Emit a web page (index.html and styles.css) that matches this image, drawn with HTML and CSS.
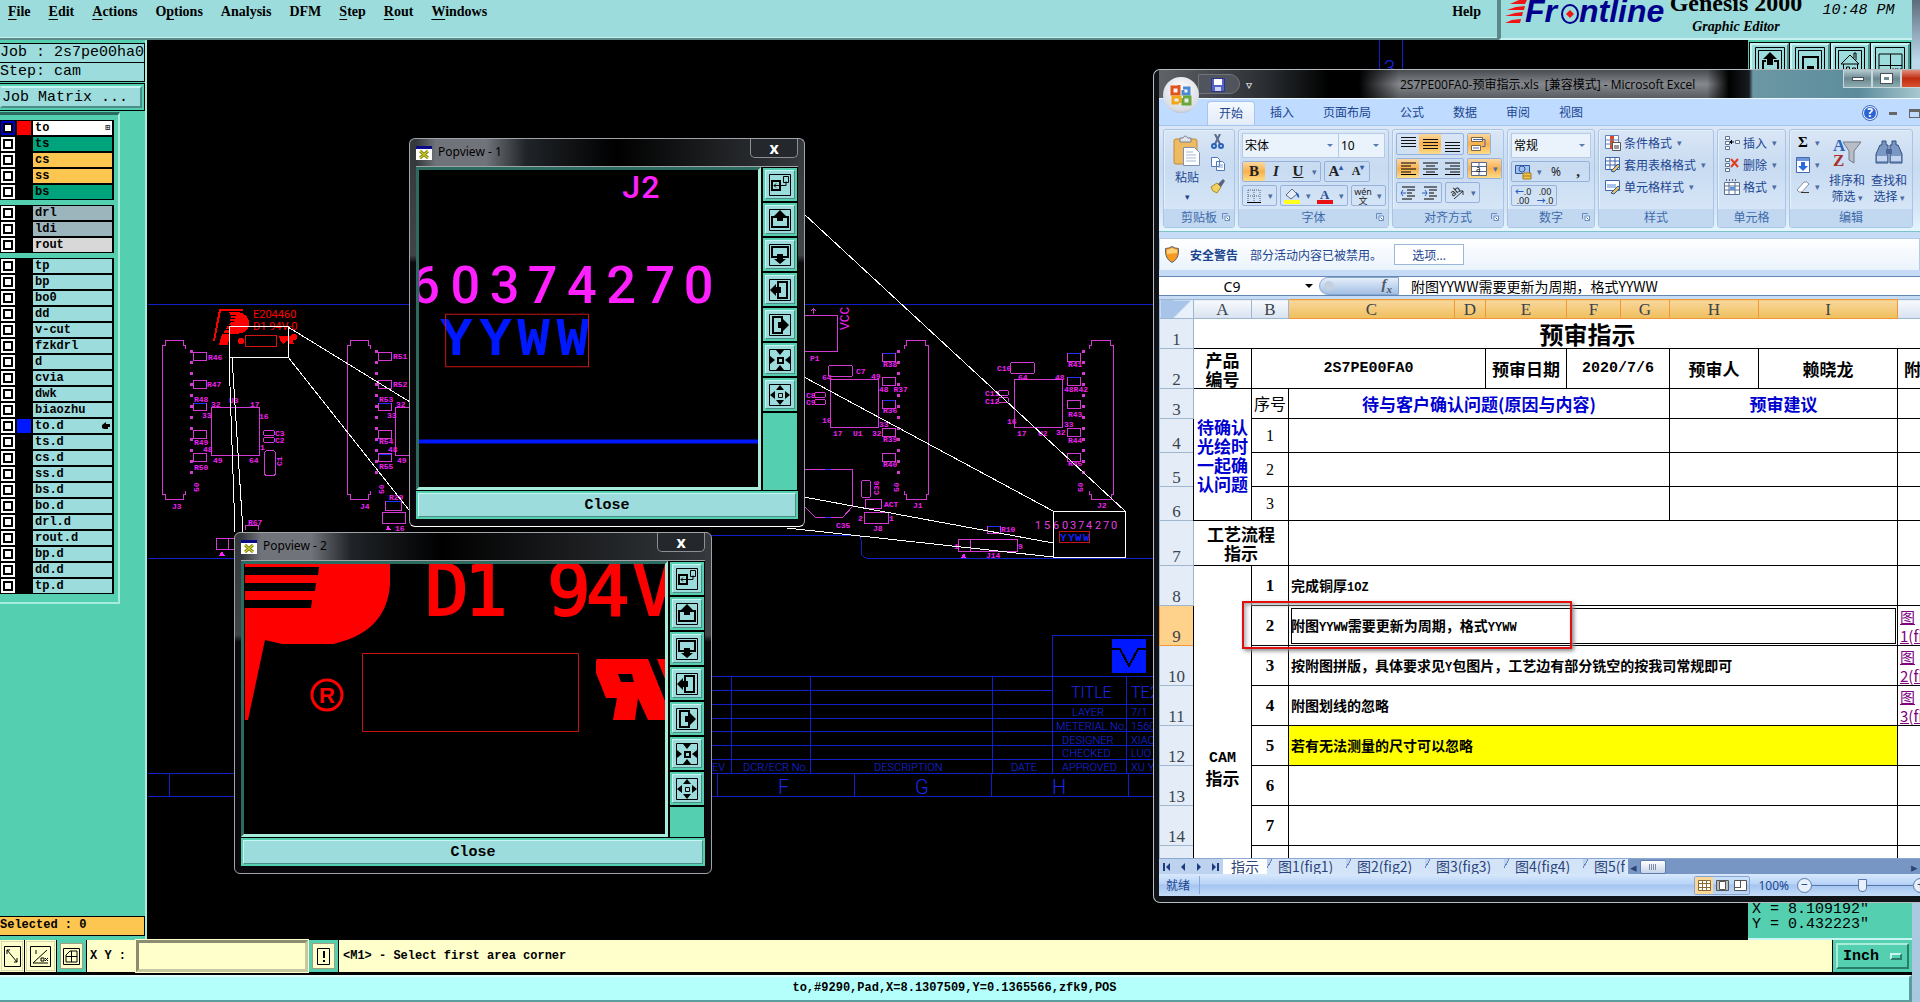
FILE: index.html
```html
<!DOCTYPE html>
<html lang="zh-CN">
  <head>
    <meta charset="UTF-8" />
    <meta name="viewport" content="width=device-width, initial-scale=1.0" />
    <title>Genesis 2000 Graphic Editor</title>
    <link rel="stylesheet" href="styles.css">
  </head>
  <body>
    <svg class="sprite" xmlns="http://www.w3.org/2000/svg">
      <defs>
        <symbol id="t-pop" viewBox="0 0 22 22"><path d="M.5.5h21v21H.5z" fill="none" stroke="#000"/><path d="M14.500 2.500h5v6h-5zM11 11.500h6v-4M5 11.500h5M7 9.500l-2 2 2 2" fill="none" stroke="#000"/><path d="M3 7h8v9H3z" fill="none" stroke="#000" stroke-width="2"/></symbol>
        <symbol id="t-up" viewBox="0 0 22 22"><path d="M.5.5h21v21H.5z" fill="none" stroke="#000"/><path d="M8 8H3v10h16V8h-5" fill="none" stroke="#000" stroke-width="2"/><path d="M11 1l6 6h-3v5H8V7H5z"/></symbol>
        <symbol id="t-down" viewBox="0 0 22 22"><path d="M.5.5h21v21H.5z" fill="none" stroke="#000"/><path d="M8 13H3V3h16v10h-5" fill="none" stroke="#000" stroke-width="2"/><path d="M11 20l6-5h-3v-5H8v5H5z"/></symbol>
        <symbol id="t-left" viewBox="0 0 22 22"><path d="M.5.5h21v21H.5z" fill="none" stroke="#000"/><path d="M9 8V3h9v16H9v-5" fill="none" stroke="#000" stroke-width="2"/><path d="M1 11l6-6v3h5v6H7v3z"/></symbol>
        <symbol id="t-right" viewBox="0 0 22 22"><path d="M.5.5h21v21H.5z" fill="none" stroke="#000"/><path d="M13 8V3H4v16h9v-5" fill="none" stroke="#000" stroke-width="2"/><path d="M20 11l-6-6v3H9v6h5v3z"/></symbol>
        <symbol id="t-in" viewBox="0 0 22 22"><path d="M.5.5h21v21H.5z" fill="none" stroke="#000"/><path d="M9 9h5v5H9z" fill="none" stroke="#000" stroke-width="2"/><path d="M7 1h8l-4 5zM7 21h8l-4-5zM1 7v8l5-4zM21 7v8l-5-4z"/></symbol>
        <symbol id="t-out" viewBox="0 0 22 22"><path d="M.5.5h21v21H.5z" fill="none" stroke="#000"/><path d="M9.500 9.500h4v4h-4z" fill="none" stroke="#000"/><path d="M7 6h8l-4-5zM7 16h8l-4 5zM6 7v8l-5-4zM16 7v8l5-4z"/></symbol>
        <symbol id="x-app" viewBox="0 0 16 14"><path d="M0 0h16v14H0z" fill="#fff"/><path d="M0 0h16v3H0z" fill="#0a0a88"/><path d="M4 5l8 7M12 5l-8 7" stroke="#8d8d12" stroke-width="3"/><path d="M4 5l8 7M12 5l-8 7" stroke="#dede3c"/></symbol>
        <symbol id="launch" viewBox="0 0 8 8"><path d="M.5 6V.5H6" fill="none" stroke="#6a8cc0"/><path d="M3 3h4.500v4.500H3z" fill="#fff" stroke="#6a8cc0"/><path d="M4.500 4.500l2 2" stroke="#3e5f99"/></symbol>
        <g id="left-block" fill="none" stroke="#d23ad2">
          <path d="M185 349v-4h-2v-5h-18v5h-3v149h3v5h18v-5h2v-3"/>
          <path d="M193.500 352.500h13v8h-13zM193.500 380.500h13v8h-13zM193.500 403.500h13v7h-13zM193.500 430.500h13v8h-13zM193.500 453.500h13v8h-13z"/>
          <path d="M191.500 350v132" stroke-width="3" stroke-dasharray="3 8"/>
        </g>
        <g id="right-block" fill="none" stroke="#d23ad2">
          <path d="M904 349v-4h2v-5h19v5h3v149h-2v5h-20v-5h-2v-3"/>
          <path d="M882.500 353.500h13v8h-13zM882.500 377.500h13v8h-13zM882.500 400.500h13v8h-13zM882.500 428.500h13v8h-13zM882.500 453.500h13v8h-13z"/>
          <path d="M898.500 350v132" stroke-width="3" stroke-dasharray="3 8"/>
        </g>
      </defs>
    </svg>

    <header class="topbar">
      <nav class="menubar">
        <a href="#"><u>F</u>ile</a>
        <a href="#"><u>E</u>dit</a>
        <a href="#"><u>A</u>ctions</a>
        <a href="#">O<u>p</u>tions</a>
        <a href="#">Analysis</a>
        <a href="#">DFM</a>
        <a href="#"><u>S</u>tep</a>
        <a href="#"><u>R</u>out</a>
        <a href="#"><u>W</u>indows</a>
        <a href="#" class="help">Help</a>
      </nav>
      <div class="brand">
        <svg class="brand-logo" width="162" height="40" viewBox="0 0 162 40">
          <g fill="#f01414"><path d="M14 0h8l-2 4H5zM11 7l9-1-1 4H2zM10 13l8-1-1 4H0zM7 20l9-1-1 4H0z"/></g>
          <g class="brand-name"><text x="20" y="22">Fr</text><text x="74" y="22">ntline</text></g>
          <ellipse cx="65" cy="14" rx="8" ry="9" fill="#9cdcdc" stroke="#00008c" stroke-width="2"/>
          <path d="M65 10l4 4-4 4-4-4z" fill="#f01414"/>
        </svg>
        <div class="brand-title"><strong>Genesis 2000</strong><em>Graphic Editor</em></div>
        <div class="clock"><span>07 Jul 2020</span><span>10:48 PM</span></div>
      </div>
    </header>

    <main class="workspace">
      <aside class="sidebar">
        <div class="job-box">
          <p>Job : 2s7pe00ha0</p>
          <p>Step: cam</p>
        </div>
        <div class="matrix-box"><button class="matrix">Job Matrix ...</button></div>
        <div class="layers">
          <div class="layer-group">
            <label class="layer current"><input type="checkbox"><i class="red"></i><span class="white">to<b>⊞</b></span></label>
            <label class="layer"><input type="checkbox"><i></i><span class="green">ts</span></label>
            <label class="layer"><input type="checkbox"><i></i><span class="orange">cs</span></label>
            <label class="layer"><input type="checkbox"><i></i><span class="orange">ss</span></label>
            <label class="layer"><input type="checkbox"><i></i><span class="green">bs</span></label>
          </div>
          <div class="layer-group">
            <label class="layer"><input type="checkbox"><i></i><span class="gray">drl</span></label>
            <label class="layer"><input type="checkbox"><i></i><span class="gray">ldi</span></label>
            <label class="layer"><input type="checkbox"><i></i><span class="silver">rout</span></label>
          </div>
          <div class="layer-group">
            <label class="layer"><input type="checkbox"><i></i><span>tp</span></label>
            <label class="layer"><input type="checkbox"><i></i><span>bp</span></label>
            <label class="layer"><input type="checkbox"><i></i><span>bo0</span></label>
            <label class="layer"><input type="checkbox"><i></i><span>dd</span></label>
            <label class="layer"><input type="checkbox"><i></i><span>v-cut</span></label>
            <label class="layer"><input type="checkbox"><i></i><span>fzkdrl</span></label>
            <label class="layer"><input type="checkbox"><i></i><span>d</span></label>
            <label class="layer"><input type="checkbox"><i></i><span>cvia</span></label>
            <label class="layer"><input type="checkbox"><i></i><span>dwk</span></label>
            <label class="layer"><input type="checkbox"><i></i><span>biaozhu</span></label>
            <label class="layer"><input type="checkbox"><i class="blue"></i><span>to.d<svg width="8" height="8" viewBox="0 0 8 8"><path d="M0 3l4-3v2h4v3H6v2H2L0 6z"/></svg></span></label>
            <label class="layer"><input type="checkbox"><i></i><span>ts.d</span></label>
            <label class="layer"><input type="checkbox"><i></i><span>cs.d</span></label>
            <label class="layer"><input type="checkbox"><i></i><span>ss.d</span></label>
            <label class="layer"><input type="checkbox"><i></i><span>bs.d</span></label>
            <label class="layer"><input type="checkbox"><i></i><span>bo.d</span></label>
            <label class="layer"><input type="checkbox"><i></i><span>drl.d</span></label>
            <label class="layer"><input type="checkbox"><i></i><span>rout.d</span></label>
            <label class="layer"><input type="checkbox"><i></i><span>bp.d</span></label>
            <label class="layer"><input type="checkbox"><i></i><span>dd.d</span></label>
            <label class="layer"><input type="checkbox"><i></i><span>tp.d</span></label>
          </div>
        </div>
        <p class="selected">Selected : 0</p>
      </aside>

      <svg class="board" xmlns="http://www.w3.org/2000/svg">
        <g transform="translate(-147 -40)">
          <!-- board outline and title block -->
          <g fill="none" stroke="#1020c8">
            <path d="M148 304.500h1005M148 558.500h86M700 535.500h158q3 0 3 4v12q1 7 8 7h284"/>
            <path d="M1379.500 40v40M1402.500 40v40"/>
            <path d="M148 773.500h1010M148 796.500h1010M169.500 773v23M717.500 773v23M854.500 773v23M991.500 773v23M1128.500 773v23"/>
            <path d="M700 676.500h458M700 690.500h352M700 704.500h458M700 718.500h458M700 731.500h458M700 745.500h458M700 759.500h458"/>
            <path d="M731.500 676v97M810.500 676v97M992.500 676v97M1052.500 773V635.500h105M1126.500 676v97"/>
          </g>
          <path d="M1112 639h34v34h-34z" fill="#0018ff"/>
          <path d="M1112 649h8l9 17 9-17h8" fill="none" stroke="#000" stroke-width="2"/>
          <g class="draft">
            <text x="1384" y="75" class="big">3</text>
            <text x="712" y="771">EV</text><text x="743" y="771">DCR/ECR No.</text><text x="874" y="771">DESCRIPTION</text><text x="1011" y="771">DATE</text>
            <text x="1071" y="698" class="mid">TITLE</text><text x="1131" y="698" class="mid">TE2</text>
            <text x="1072" y="716">LAYER</text><text x="1131" y="716">7/1</text>
            <text x="1056" y="730">METERIAL No.</text><text x="1131" y="730">1560</text>
            <text x="1062" y="744">DESIGNER</text><text x="1131" y="744">XIAO</text>
            <text x="1062" y="757">CHECKED</text><text x="1131" y="757">LUO</text>
            <text x="1062" y="771">APPROVED</text><text x="1131" y="771">XU Y</text>
            <text x="778" y="794" class="big">F</text><text x="915" y="794" class="big">G</text><text x="1052" y="794" class="big">H</text>
          </g>

          <!-- components -->
          <use href="#left-block"/>
          <use href="#left-block" x="185"/>
          <use href="#right-block"/>
          <use href="#right-block" x="185"/>
          <g fill="none" stroke="#d23ad2">
            <path d="M211.500 407.500h48v48h-48zM395.500 407.500h30v48h-30zM830.500 379.500h48v48h-48zM1014.500 379.500h48v48h-48z"/>
            <rect x="263.500" y="430.500" width="11" height="5" rx="2"/><rect x="263.500" y="437.500" width="11" height="5" rx="2"/><rect x="264.500" y="450.500" width="11" height="25" rx="3"/>
            <rect x="828.500" y="365.500" width="24" height="11" rx="2"/><rect x="1010.500" y="362.500" width="24" height="11" rx="2"/>
            <rect x="814.500" y="392.500" width="11" height="5" rx="2"/><rect x="814.500" y="399.500" width="11" height="5" rx="2"/>
            <rect x="998.500" y="390.500" width="10" height="5" rx="2"/><rect x="998.500" y="397.500" width="10" height="5" rx="2"/>
            <rect x="861.500" y="480.500" width="9" height="17" rx="2"/>
            <path d="M800 315.500h37.500v36H800M800 469.500h52.500v37l-10 11h-27l-15-15M865.500 499.500h16v9h-16zM864.500 512.500h24v11h-24zM987.500 526.500h13v7h-13zM958.500 539.500h59v12h-59zM970.500 539v12"/>
            <path d="M245.500 530v-4.500h13v4.500M234 538.500h-17.500v11h17M228.500 539v10M385.500 501.500h16v9h-16zM382.500 512.500h23v11h-23zM813.500 314v-5M811 311l2.500-2.500L816 311"/>
          </g>
          <path d="M222 551l3 5h-6zM388 525l3 5h-5zM964 553l2 5h-5z" fill="#ff20ff"/>
          <path d="M194 403.500h12M379 403.500h12M379 454.500h12M386 501.500h15M883 353.500h12M883 400.500h12M1068 353.500h12M1068 377.500h12M825 469.500h6M825 517.500h6M988 526.500h12" stroke="#2030ff"/>
          <g class="silk">
            <text x="208" y="360">R46</text><text x="207" y="387">R47</text><text x="194" y="402">R48</text><text x="194" y="445">R49</text><text x="194" y="470">R50</text>
            <text x="211" y="407">32</text><text x="202" y="418">33</text><text x="229" y="403">U3</text><text x="250" y="407">17</text><text x="259" y="419">16</text><text x="275" y="436">C3</text><text x="275" y="443">C2</text><text x="203" y="452">48</text><text x="213" y="463">49</text><text x="249" y="463">64</text><text x="260" y="450">1</text>
            <text x="172" y="509">J3</text><text x="360" y="509">J4</text><text x="248" y="525">R67</text>
            <text x="393" y="359">R51</text><text x="393" y="387">R52</text><text x="379" y="402">R53</text><text x="379" y="444">R54</text><text x="379" y="469">R55</text><text x="396" y="407">32</text><text x="387" y="418">33</text><text x="388" y="452">48</text><text x="397" y="463">49</text><text x="389" y="500">R29</text><text x="395" y="531">16</text>
            <text x="810" y="361">P1</text><text x="856" y="374">C7</text><text x="822" y="380">64</text><text x="871" y="379">49</text><text x="806" y="398">C8</text><text x="806" y="405">C9</text><text x="822" y="423">16</text><text x="833" y="436">17</text><text x="853" y="436">U1</text><text x="872" y="436">32</text><text x="879" y="427">33</text>
            <text x="883" y="367">R38</text><text x="879" y="392">48 R37</text><text x="883" y="413">R36</text><text x="883" y="442">R39</text><text x="883" y="467">R40</text><text x="913" y="508">J1</text><text x="884" y="507">ACT</text><text x="858" y="521">2</text><text x="889" y="521">1</text><text x="873" y="531">J8</text><text x="836" y="528">C35</text>
            <text x="997" y="371">C10</text><text x="1018" y="380">64</text><text x="1055" y="380">48</text><text x="985" y="396">C11</text><text x="985" y="404">C12</text><text x="1007" y="424">16</text><text x="1017" y="436">17</text><text x="1038" y="436">U2</text><text x="1056" y="435">32</text><text x="1064" y="427">33</text>
            <text x="1068" y="367">R41</text><text x="1064" y="392">48R42</text><text x="1068" y="417">R43</text><text x="1068" y="443">R44</text><text x="1068" y="466">R45</text><text x="1097" y="508">J2</text><text x="1001" y="532">R10</text><text x="954" y="549">1</text><text x="1018" y="549">9</text><text x="986" y="558">J14</text>
            <text transform="translate(849 330) rotate(-90)" class="vcc">VCC</text><text transform="translate(879 495) rotate(-90)">C36</text><text transform="translate(282 466) rotate(-90)">C1</text><text transform="translate(199 492) rotate(-90)">50</text><text transform="translate(384 494) rotate(-90)">50</text><text transform="translate(899 492) rotate(-90)">50</text><text transform="translate(1083 492) rotate(-90)">50</text>
          </g>
          <text class="serial" x="1035 1044 1053 1062 1070 1078 1086 1095 1103 1111" y="529">1560374270</text>
          <text class="yyww-small" x="1060 1068 1075 1083" y="541">YYWW</text>
          <path d="M1059.500 531.500h30v11h-30z" fill="none" stroke="#c81414"/>

          <!-- maker logo -->
          <g fill="#f00">
            <path d="M219 309h24v2h-22l-6 30h-2zM229 312h10q11 3 10 13-2 8-12 9h-7l-2 11h-9l2-8 7-12 3-3-1-3 1-2z"/>
            <path d="M279 336h12l3 8h-5l-2-4-4 4-3-4z"/>
            <circle cx="241" cy="341" r="3"/><circle cx="294" cy="337" r="3"/>
          </g>
          <path d="M224 315h12M223 318h12M222 321h12M221 325h10M220 329h9M220 333h9" stroke="#000"/>
          <path d="M245.500 335.500h31v11h-31z" fill="none" stroke="#d01414"/>
          <g class="ul-mark"><text x="253" y="318">E204460</text><text x="253" y="330">D1 94V-0</text></g>

          <!-- leader lines to the pop views -->
          <path d="M229.500 326.500h59v31h-59zM1053.500 511.500h72v46h-72zM229 357l6 175M232 357l11 175M288 327l122 75M288 357l121 153M804 214l321 297M804 377l249 134M804 497l249 46M787 528l266 29" fill="none" stroke="#fff"/>
        </g>
      </svg>

      <aside class="right-tools">
        <div class="tool-grid">
          <button aria-label="up"><svg width="32" height="34" viewBox="0 0 32 34"><path d="M1.500 1.500h29v31h-29zM4.500 4.500h23v26h-23z" fill="none" stroke="#000"/><path d="M12 15H9v16h15V15h-4" fill="none" stroke="#000" stroke-width="2"/><path d="M16 6l7 7h-4v6h-6v-6H9z"/></svg></button>
          <button aria-label="down"><svg width="32" height="34" viewBox="0 0 32 34"><path d="M1.500 1.500h29v31h-29zM4.500 4.500h23v26h-23z" fill="none" stroke="#000"/><path d="M13 25H9V11h15v14h-4" fill="none" stroke="#000" stroke-width="2"/><path d="M13 20h7v5h3l-7 6-6-6h3z"/></svg></button>
          <button aria-label="home"><svg width="32" height="34" viewBox="0 0 32 34"><path d="M1.500 1.500h29v31h-29zM4.500 4.500h23v26h-23z" fill="none" stroke="#000"/><path d="M7 18l9-9 9 9zM9.500 18v13h14V18M12.500 21h3v4h-3zM18.500 31v-9h3v9M20 12V7h2v7" fill="none" stroke="#000"/></svg></button>
          <button aria-label="xy"><svg width="32" height="34" viewBox="0 0 32 34"><path d="M1.500 1.500h29v31h-29zM5 8h23v23H5zM16.500 8v23M5 19.500h23" fill="none" stroke="#000"/><text x="18" y="27" font-size="8">XY</text></svg></button>
        </div>
        <p class="coords">X = 8.109192"<br>Y = 0.432223"</p>
      </aside>
    </main>

    <footer>
      <div class="command">
        <button class="mode" aria-label="Snap"><svg width="17" height="21" viewBox="0 0 17 21"><path d="M.5.5h16v20H.5zM3 4l10 12M3 8V4h3M10 16h3v-4" fill="none" stroke="#000"/></svg></button>
        <button class="mode" aria-label="Measure"><svg width="21" height="21" viewBox="0 0 21 21"><path d="M.5.5h20v20H.5zM3 17L17 4M6 4v4M3 17h15M11 12h3v3h-3zM15 12l3 3M18 12l-3 3" fill="none" stroke="#000"/></svg></button>
        <button class="mode on" aria-label="Grid"><svg width="17" height="17" viewBox="0 0 17 17"><path d="M.5.5h16v16H.5zM3 7l4-4h7v11H3zM8.500 3v11M3 8.500h11" fill="none" stroke="#000"/></svg></button>
        <label class="xy" for="xy">X Y :</label>
        <input id="xy" type="text">
        <button class="mode on" aria-label="Alert"><svg width="13" height="17" viewBox="0 0 13 17"><path d="M.5.5h12v16H.5z" fill="none" stroke="#000"/><path d="M6 3h2v7H6zM6 12h2v2H6z"/></svg></button>
        <p class="hint">&lt;M1&gt; - Select first area corner</p>
        <div class="unit"><button>Inch<i></i></button></div>
      </div>
      <p class="status-line">to,#9290,Pad,X=8.1307509,Y=0.1365566,zfk9,POS</p>
    </footer>

    <section class="popview first">
      <header><svg width="16" height="14"><use href="#x-app"/></svg><span>Popview - 1</span><button class="shut" aria-label="Close window">x</button></header>
      <div class="pop-body">
        <div class="pop-view">
          <svg viewBox="420 170 337 318" preserveAspectRatio="xMinYMin slice">
            <text class="pop-label" x="631 650" y="198">J2</text>
            <text class="pop-digits" x="426 466 505 543 582 621 660 698" y="302">60374270</text>
            <text class="pop-week" x="457 496 534 573" y="354">YYWW</text>
            <path d="M446.500 313.500h142v52h-142z" fill="none" stroke="#c81414"/>
            <path d="M420 438h337v4H420z" fill="#0018ff"/>
          </svg>
        </div>
        <div class="pop-tools">
          <button aria-label="Pop"><svg><use href="#t-pop"/></svg></button>
          <button aria-label="Up"><svg><use href="#t-up"/></svg></button>
          <button aria-label="Down"><svg><use href="#t-down"/></svg></button>
          <button aria-label="Left"><svg><use href="#t-left"/></svg></button>
          <button aria-label="Right"><svg><use href="#t-right"/></svg></button>
          <button aria-label="Zoom in"><svg><use href="#t-in"/></svg></button>
          <button aria-label="Zoom out"><svg><use href="#t-out"/></svg></button>
          <i></i>
        </div>
        <button class="pop-close">Close</button>
      </div>
    </section>

    <section class="popview second">
      <header><svg width="16" height="14"><use href="#x-app"/></svg><span>Popview - 2</span><button class="shut" aria-label="Close window">x</button></header>
      <div class="pop-body">
        <div class="pop-view">
          <svg viewBox="244 564 421 270" preserveAspectRatio="xMinYMin slice">
            <path d="M245 564h145v20q-3 48-57 60h-51l-17-4-17 80h-3z" fill="#f00"/>
            <path d="M245 567h74l-1 8h-73zM245 583h71l-1 8h-70zM245 600h67l-1 8h-66z"/>
            <text class="pop-d1" x="447 486 569 608 654" y="615">D194V</text>
            <circle cx="327" cy="695" r="15" fill="none" stroke="#f00" stroke-width="3"/>
            <text class="pop-r" x="327" y="703">R</text>
            <path d="M362.500 653.500h216v78h-216z" fill="none" stroke="#c81414"/>
            <path d="M597 659h51l17 42v19h-17l-10-22-3 22h-22l4-22h-11l-10-25v-12zM657 659h8v20zM618 674l3 8h13l-2-8z" fill="#f00" fill-rule="evenodd"/>
          </svg>
        </div>
        <div class="pop-tools">
          <button aria-label="Pop"><svg><use href="#t-pop"/></svg></button>
          <button aria-label="Up"><svg><use href="#t-up"/></svg></button>
          <button aria-label="Down"><svg><use href="#t-down"/></svg></button>
          <button aria-label="Left"><svg><use href="#t-left"/></svg></button>
          <button aria-label="Right"><svg><use href="#t-right"/></svg></button>
          <button aria-label="Zoom in"><svg><use href="#t-in"/></svg></button>
          <button aria-label="Zoom out"><svg><use href="#t-out"/></svg></button>
          <i></i>
        </div>
        <button class="pop-close">Close</button>
      </div>
    </section>

    <section class="excel">
      <div class="orb">
        <svg width="24" height="24" viewBox="0 0 24 24" fill="none" stroke-width="3"><path d="M10 4H3v7h7V2" stroke="#e2521c"/><path d="M14 5h6v6h-6V7" stroke="#4a8ad0"/><path d="M10 20H4v-6h7v6" stroke="#f0a818"/><path d="M14 14h7v7h-7v-6" stroke="#6aa83a"/></svg>
      </div>
      <header class="excel-title">
        <div class="quick">
          <button aria-label="保存"><svg width="14" height="14" viewBox="0 0 14 14"><path d="M.5.5h13v13H.5z" fill="#5560c8" stroke="#2c348c"/><path d="M3 1h8v6H3z" fill="#fff"/><path d="M4 9h6v4H4z" fill="#cfd6f0"/></svg></button>
        </div>
        <span class="more">▿</span>
        <h1>2S7PE00FA0-预审指示.xls&nbsp; [兼容模式] - Microsoft Excel</h1>
        <div class="win-buttons">
          <button aria-label="最小化"><i class="min"></i></button><button aria-label="还原"><i class="max"></i></button><button class="end" aria-label="关闭">x</button>
        </div>
      </header>

      <nav class="tabs">
        <a href="#" class="active">开始</a><a href="#">插入</a><a href="#">页面布局</a><a href="#">公式</a><a href="#">数据</a><a href="#">审阅</a><a href="#">视图</a>
        <div class="tabs-end"><button class="ask" aria-label="帮助">?</button><i class="min"></i><i class="max"></i></div>
      </nav>

      <div class="ribbon">
        <div class="group g-clip">
          <div class="group-body">
            <button class="big-btn">
              <svg width="28" height="32" viewBox="0 0 28 32"><rect x="1" y="4" width="23" height="25" rx="2" fill="#eebb62" stroke="#c08a34"/><path d="M7 7V3h3q2-4 5 0h3v4z" fill="#dfe3ea" stroke="#7a818e"/><path d="M10.500 12.500h11l5 5v13h-16z" fill="#fff" stroke="#7f92b4"/><path d="M13 17h7M13 20h10M13 23h10M13 26h10" stroke="#a9b8d6"/></svg>
              粘贴<small>▾</small>
            </button>
            <div class="stack clip-icons">
              <svg width="16" height="16" viewBox="0 0 16 16"><path d="M5 0l5 10M10 0L5 10" stroke="#5b6c8c" stroke-width="2"/><circle cx="4" cy="12" r="2" fill="none" stroke="#2b61b8" stroke-width="2"/><circle cx="11" cy="12" r="2" fill="none" stroke="#2b61b8" stroke-width="2"/></svg>
              <svg width="16" height="16" viewBox="0 0 16 16"><path d="M1.500 1.500h6l2 2v7h-8zM6.500 5.500h6l2 2v7h-8z" fill="#fff" stroke="#4d79bd"/><path d="M8 9h5M8 11h5" stroke="#7ea1d6"/></svg>
              <svg width="16" height="16" viewBox="0 0 16 16"><path d="M1 9l6-4 4 4-4 6q-5-1-6-6z" fill="#f2d25c" stroke="#a88a2c"/><path d="M8 6l5-5 2 2-4 6z" fill="#59627c"/></svg>
            </div>
          </div>
          <h2>剪贴板<svg width="8" height="8"><use href="#launch"/></svg></h2>
        </div>

        <div class="group g-font">
          <div class="group-body stack">
            <div class="line">
              <label class="combo wide"><select aria-label="字体"><option>宋体</option></select></label><label class="combo"><select aria-label="字号"><option>10</option></select></label>
            </div>
            <div class="line">
              <div class="seg"><button class="on serif"><b>B</b></button><button class="serif"><em>I</em></button><button class="serif"><u>U</u></button><button class="drop">▾</button></div>
              <div class="seg"><button class="serif">A<sup>▴</sup></button><button class="serif small">A<sup>▾</sup></button></div>
            </div>
            <div class="line">
              <div class="seg"><button aria-label="边框"><svg width="14" height="14" viewBox="0 0 14 14"><path d="M1 1h12v12M1 1v12M7 1v12M1 7h12" fill="none" stroke="#54658a" stroke-dasharray="1 1"/><path d="M0 13.500h14" stroke="#000"/></svg></button><button class="drop">▾</button></div>
              <div class="seg"><button aria-label="填充"><svg width="17" height="17" viewBox="0 0 17 17"><path d="M2 8l6-6 5 5-6 5z" fill="#e8eef8" stroke="#55688c"/><path d="M12 5q4 2 3 6-2-1-3-4z" fill="#2c64b8"/><path d="M0 13h16v4H0z" fill="#ffff20"/></svg></button><button class="drop">▾</button><button aria-label="字体颜色"><svg width="17" height="17" viewBox="0 0 17 17"><text x="3" y="12" class="glyph">A</text><path d="M0 13h16v4H0z" fill="#e81010"/></svg></button><button class="drop">▾</button></div>
              <div class="seg"><button class="wen">wén<br>文</button><button class="drop">▾</button></div>
            </div>
          </div>
          <h2>字体<svg width="8" height="8"><use href="#launch"/></svg></h2>
        </div>

        <div class="group g-align">
          <div class="group-body stack">
            <div class="line">
              <div class="seg"><button class="al" aria-label="顶端"><i class="bars top"></i></button><button class="al on" aria-label="居中"><i class="bars"></i></button><button class="al" aria-label="底端"><i class="bars low"></i></button></div>
              <div class="seg"><button class="on" aria-label="自动换行"><svg width="18" height="16" viewBox="0 0 18 16"><path d="M1.500 1.500h11v4h-11zM1.500 9.500h9v5h-9z" fill="#fff" stroke="#7d6440"/><path d="M3 3.500h12v7h-3M3 12h6" fill="none" stroke="#46659c"/></svg></button></div>
            </div>
            <div class="line">
              <div class="seg"><button class="al on" aria-label="左对齐"><svg width="15" height="13" viewBox="0 0 15 13"><path d="M0 1h15M0 4h10M0 7h15M0 10h10M0 12.500h15" stroke="#000"/></svg></button><button class="al" aria-label="居中"><svg width="15" height="13" viewBox="0 0 15 13"><path d="M0 1h15M3 4h9M0 7h15M3 10h9M0 12.500h15" stroke="#000"/></svg></button><button class="al" aria-label="右对齐"><svg width="15" height="13" viewBox="0 0 15 13"><path d="M0 1h15M5 4h10M0 7h15M5 10h10M0 12.500h15" stroke="#000"/></svg></button></div>
              <div class="seg on-seg"><button aria-label="合并"><svg width="16" height="14" viewBox="0 0 16 14"><path d="M.5.5h15v13H.5zM8 1v3M8 10v3M1 4.500h14M1 9.500h14" fill="#fff" stroke="#55688c"/><text x="5" y="10" font-size="8">a</text></svg></button><button class="drop on">▾</button></div>
            </div>
            <div class="line">
              <div class="seg"><button class="al" aria-label="减少缩进"><svg width="16" height="14" viewBox="0 0 16 14"><path d="M2 1h13M7 4h8M7 7h5M7 10h8M2 13h10" stroke="#000"/><path d="M6 7H1M3 4L1 7l2 3" fill="none" stroke="#2c5cc0"/></svg></button><button class="al" aria-label="增加缩进"><svg width="16" height="14" viewBox="0 0 16 14"><path d="M2 1h13M7 4h8M7 7h5M7 10h8M2 13h10" stroke="#000"/><path d="M0 7h5M3 4l2 3-2 3" fill="none" stroke="#2c5cc0"/></svg></button></div>
              <div class="seg"><button aria-label="方向"><svg width="16" height="14" viewBox="0 0 16 14"><text transform="translate(4 11) rotate(-40)" font-size="9">ab</text><path d="M5 13l9-8M14 9V5h-4" fill="none" stroke="#333"/></svg></button><button class="drop">▾</button></div>
            </div>
          </div>
          <h2>对齐方式<svg width="8" height="8"><use href="#launch"/></svg></h2>
        </div>

        <div class="group g-num">
          <div class="group-body stack">
            <div class="line"><label class="combo full"><select aria-label="数字格式"><option>常规</option></select></label></div>
            <div class="line"><div class="seg"><button aria-label="货币"><svg width="17" height="16" viewBox="0 0 17 16"><path d="M.5 1.500h14v8H.5z" fill="#9fc0ea" stroke="#2f58a4"/><circle cx="7" cy="5" r="3" fill="none" stroke="#2f58a4"/><path d="M8 9h8v6H8z" fill="#f2c64a" stroke="#a47c1c"/><path d="M8 12h8" stroke="#a47c1c"/></svg></button><button class="drop">▾</button><button>%</button><button class="serif"><b>,</b></button></div></div>
            <div class="line"><div class="seg"><button class="dec"><b>←</b>.0<br>.00</button><button class="dec">.00<br><b>→</b>.0</button></div></div>
          </div>
          <h2>数字<svg width="8" height="8"><use href="#launch"/></svg></h2>
        </div>

        <div class="group g-style">
          <div class="group-body stack text-list">
            <button><svg width="16" height="16" viewBox="0 0 16 16"><path d="M.5.500h13v13H.5z" fill="#fff" stroke="#6382b8"/><path d="M5 1h4v13H5z" fill="#d8492c"/><path d="M1 5h12M1 9h12" stroke="#6382b8"/><path d="M7.500 7.500h8v8h-8z" fill="#fff" stroke="#555"/><path d="M9 11h5M9 13h5" stroke="#333"/></svg>条件格式<small>▾</small></button>
            <button><svg width="16" height="16" viewBox="0 0 16 16"><path d="M.5.500h14v12H.5z" fill="#fff" stroke="#3f67ac"/><path d="M1 4h14M1 8h14M5 1v12M10 1v12" stroke="#3f67ac"/><path d="M6 14l7-7 2 2-6 6z" fill="#efbd55" stroke="#2858a8"/></svg>套用表格格式<small>▾</small></button>
            <button><svg width="16" height="16" viewBox="0 0 16 16"><path d="M.5 1.500h14v10H.5z" fill="#fff" stroke="#3f67ac"/><path d="M2 5h9v4H2z" fill="#a5c4ee"/><path d="M6 14l7-7 2 2-6 6z" fill="#efbd55" stroke="#2858a8"/></svg>单元格样式<small>▾</small></button>
          </div>
          <h2>样式</h2>
        </div>

        <div class="group g-cell">
          <div class="group-body stack text-list">
            <button><svg width="16" height="16" viewBox="0 0 16 16"><path d="M1.500 1.500h4v3h-4zM1.500 6.500h4v3h-4zM1.500 11.500h4v3h-4zM11.500 5.500h4v3h-4z" fill="#fff" stroke="#5c6f94"/><path d="M10 7H7M8 5L6 7l2 2" stroke="#000"/></svg>插入<small>▾</small></button>
            <button><svg width="16" height="16" viewBox="0 0 16 16"><path d="M1.500 1.500h4v3h-4zM1.500 6.500h4v3h-4zM1.500 11.500h4v3h-4z" fill="#fff" stroke="#5c6f94"/><path d="M7 2l7 8M14 2L7 10" stroke="#e23c1c" stroke-width="2"/></svg>删除<small>▾</small></button>
            <button><svg width="16" height="16" viewBox="0 0 16 16"><path d="M.5 3.500h15v12H.5z" fill="#fff" stroke="#5c6f94"/><path d="M1 7h14M1 11h14M5 4v11M11 4v11" stroke="#5c6f94"/><path d="M6 8h5v3H6z" fill="#5d93dc"/><path d="M2 1h12" stroke="#000" stroke-dasharray="1 2"/></svg>格式<small>▾</small></button>
          </div>
          <h2>单元格</h2>
        </div>

        <div class="group g-edit">
          <div class="group-body">
            <div class="stack text-list">
              <button><b class="sigma">Σ</b><small>▾</small></button>
              <button><svg width="14" height="16" viewBox="0 0 14 16"><path d="M.5.500h13v15H.5z" fill="#fff" stroke="#4369ae"/><path d="M1 1h12v3H1z" fill="#6f98dc"/><path d="M5 5h4v4h3l-5 5-5-5h3z" fill="#2a6be0"/></svg><small>▾</small></button>
              <button><svg width="14" height="14" viewBox="0 0 14 14"><path d="M1 10l7-8q3-1 5 2l-7 8H3z" fill="#fff" stroke="#8490a8"/><path d="M5 12.500h8" stroke="#333"/></svg><small>▾</small></button>
            </div>
            <button class="big-btn two"><svg width="32" height="32" viewBox="0 0 32 32"><text x="2" y="14" class="az a">A</text><text x="2" y="29" class="az z">Z</text><path d="M12 5h18l-7 9v12l-5-3v-9z" fill="#b9bec6" stroke="#737a86"/></svg>排序和<br>筛选<small>▾</small></button>
            <button class="big-btn two"><svg width="32" height="32" viewBox="0 0 32 32"><g fill="#7b98c4" stroke="#33507f"><path d="M9 4h4v4h2v18H3v-9l4-9h2zM19 4h4v4h2l4 9v9H17V8h2z"/></g><path d="M4 19h10v5H4zM18 19h10v5H18z" fill="#c2d4ee"/><path d="M13 12h6v5h-6z" fill="#4a6698"/></svg>查找和<br>选择<small>▾</small></button>
          </div>
          <h2>编辑</h2>
        </div>
      </div>

      <div class="warning">
        <svg width="14" height="17" viewBox="0 0 14 17"><path d="M7 .5q3 2 6.500 2 1 10-6.500 14Q-.5 12.500.5 2.500 4 2.500 7 .5z" fill="#f79a1e" stroke="#5d6470"/><path d="M7 2q2 1 5 2v3L2 8V4q3-1 5-2z" fill="#ffd07a"/></svg>
        <strong>安全警告</strong><span>部分活动内容已被禁用。</span><button>选项...</button>
      </div>

      <div class="formula">
        <label class="name-box"><input type="text" value="C9" aria-label="名称框"><i></i></label>
        <div class="fx"><i></i><em>f<sub>x</sub></em></div>
        <input type="text" class="fx-input" value="附图YYWW需要更新为周期，格式YYWW" aria-label="编辑栏">
      </div>

      <div class="sheet">
        <table>
          <colgroup><col class="c-n"><col class="c-a"><col class="c-b"><col class="c-c"><col class="c-d"><col class="c-e"><col class="c-f"><col class="c-g"><col class="c-h"><col class="c-i"><col class="c-j"></colgroup>
          <thead>
            <tr><th class="corner"></th><th>A</th><th>B</th><th class="sel">C</th><th class="sel">D</th><th class="sel">E</th><th class="sel">F</th><th class="sel">G</th><th class="sel">H</th><th class="sel">I</th><th></th></tr>
          </thead>
          <tbody>
            <tr class="r-30"><th>1</th><td colspan="10" class="title">预审指示</td></tr>
            <tr class="r-40"><th>2</th><td>产品<br>编号</td><td colspan="3" class="latin">2S7PE00FA0</td><td>预审日期</td><td colspan="2" class="latin">2020/7/6</td><td>预审人</td><td>赖晓龙</td><td class="tail">附图</td></tr>
            <tr class="r-30"><th>3</th><td rowspan="4" class="ask-col">待确认<br>光绘时<br>一起确<br>认问题</td><td class="thin">序号</td><td colspan="5" class="ask-col">待与客户确认问题(原因与内容)</td><td colspan="2" class="ask-col">预审建议</td><td></td></tr>
            <tr class="r-34"><th>4</th><td class="num thin">1</td><td colspan="5"></td><td colspan="2"></td><td></td></tr>
            <tr class="r-34"><th>5</th><td class="num thin">2</td><td colspan="5"></td><td colspan="2"></td><td></td></tr>
            <tr class="r-34"><th>6</th><td class="num thin">3</td><td colspan="5"></td><td colspan="2"></td><td></td></tr>
            <tr class="r-45"><th>7</th><td colspan="2">工艺流程<br>指示</td><td colspan="7"></td><td></td></tr>
            <tr class="r-40"><th>8</th><td rowspan="10"><span class="latin">CAM</span><br>指示</td><td class="num">1</td><td colspan="7" class="note">完成铜厚<span>1OZ</span></td><td></td></tr>
            <tr class="r-40"><th class="sel">9</th><td class="num">2</td><td colspan="7" class="note active">附图<span>YYWW</span>需要更新为周期，格式<span>YYWW</span></td><td class="ref"><a href="#">图<br>1(fig1)</a></td></tr>
            <tr class="r-40"><th>10</th><td class="num">3</td><td colspan="7" class="note">按附图拼版，具体要求见<span>Y</span>包图片，工艺边有部分铣空的按我司常规即可</td><td class="ref"><a href="#">图<br>2(fig2)</a></td></tr>
            <tr class="r-40"><th>11</th><td class="num">4</td><td colspan="7" class="note">附图划线的忽略</td><td class="ref"><a href="#">图<br>3(fig3)</a></td></tr>
            <tr class="r-40"><th>12</th><td class="num">5</td><td colspan="7" class="note yellow">若有无法测量的尺寸可以忽略</td><td></td></tr>
            <tr class="r-40"><th>13</th><td class="num">6</td><td colspan="7"></td><td></td></tr>
            <tr class="r-40"><th>14</th><td class="num">7</td><td colspan="7"></td><td></td></tr>
            <tr class="r-40"><th></th><td></td><td colspan="7"></td><td></td></tr>
            <tr class="r-40"><th></th><td></td><td colspan="7"></td><td></td></tr>
            <tr class="r-40"><th></th><td></td><td colspan="7"></td><td></td></tr>
          </tbody>
        </table>
        <div class="callout"></div>
      </div>

      <div class="sheet-bar">
        <div class="sheet-nav">
          <button aria-label="第一张"><svg width="8" height="8" viewBox="0 0 8 8"><path d="M0 0h2v8H0zM7 0v8L3 4z"/></svg></button>
          <button aria-label="上一张"><svg width="8" height="8" viewBox="0 0 8 8"><path d="M6 0v8L2 4z"/></svg></button>
          <button aria-label="下一张"><svg width="8" height="8" viewBox="0 0 8 8"><path d="M2 0v8l4-4z"/></svg></button>
          <button aria-label="最后一张"><svg width="8" height="8" viewBox="0 0 8 8"><path d="M6 0h2v8H6zM1 0v8l4-4z"/></svg></button>
        </div>
        <a href="#" class="active">指示</a><a href="#">图1(fig1)</a><a href="#">图2(fig2)</a><a href="#">图3(fig3)</a><a href="#">图4(fig4)</a><a href="#" class="cut">图5(fig5)</a>
        <div class="scroll"><span>◂</span><i></i><span class="far">▸</span></div>
      </div>

      <div class="excel-status">
        <span>就绪</span>
        <div class="views">
          <button class="on" aria-label="普通"><svg width="13" height="11" viewBox="0 0 13 11"><path d="M.5.500h12v10H.5zM4.500 0v11M8.500 0v11M0 3.500h13M0 7.500h13" fill="#fff" stroke="#8a6a34"/></svg></button>
          <button aria-label="页面布局"><svg width="13" height="11" viewBox="0 0 13 11"><path d="M.5.500h12v10H.5z" fill="#b9bcc4" stroke="#555"/><path d="M3.500 1.500h6v8h-6z" fill="#fff" stroke="#555"/></svg></button>
          <button aria-label="分页预览"><svg width="13" height="11" viewBox="0 0 13 11"><path d="M.5.500h12v10H.5z" fill="#fff" stroke="#555"/><path d="M6.500 0v7M0 7.500h7" stroke="#555"/></svg></button>
        </div>
        <label for="zoom">100%</label>
        <button class="round">−</button>
        <input id="zoom" type="range" min="0" max="100" value="50">
        <button class="round">+</button>
      </div>
    </section>
  </body>
</html>
```
FILE: styles.css
```css
* {
  margin: 0;
  padding: 0;
  box-sizing: border-box;
}

:root {
  --cyan: #9cdcdc;
  --teal: #54cfb0;
  --cream: #ffffcc;
  --mono: "Liberation Mono", "Noto Sans CJK SC", monospace;
  --serif: "Liberation Serif", serif;
  --ui: "Noto Sans", "Noto Sans CJK SC", sans-serif;
}

body {
  position: relative;
  display: flex;
  flex-direction: column;
  height: 100vh;
  padding-right: 8px;
  overflow: hidden;
  background: linear-gradient(#5c6c7c, #bcd8ec 60px, #a8c8e0);
  font-family: var(--mono);
  color: #000;
}

button,
input,
select {
  font: inherit;
  color: inherit;
  background: none;
  border: 0;
}

a {
  color: inherit;
  text-decoration: none;
}

.sprite {
  position: absolute;
  width: 0;
  height: 0;
}

/* top bar */
.topbar {
  display: flex;
  flex: none;
  height: 40px;
}

.menubar {
  display: flex;
  flex: 1;
  gap: 18px;
  padding: 3px 16px 0 8px;
  background: var(--cyan);
  border-right: 2px solid #5c8888;
  border-bottom: 2px solid #5c8888;
  box-shadow: inset 0 -1px #c8f0f0;
  font: bold 14px/17px var(--serif);
}

.menubar u {
  text-underline-offset: 3px;
}

.menubar .help {
  margin-left: auto;
}

.brand {
  display: flex;
  flex: none;
  width: 413px;
  overflow: hidden;
  background: var(--cyan);
  border-left: 2px solid #5c8888;
  border-bottom: 2px solid #c8f0f0;
}

.brand-logo {
  margin-left: 4px;
  flex: none;
}

.brand-name {
  font: italic bold 32px "Liberation Sans", sans-serif;
  fill: #00008c;
}

.brand-title {
  display: flex;
  flex-direction: column;
  justify-content: flex-end;
  align-items: center;
  gap: 4px;
  width: 138px;
  padding-bottom: 3px;
  white-space: nowrap;
}

.brand-title strong {
  font: bold 24px/24px var(--serif);
}

.brand-title em {
  font: italic bold 14px/16px var(--serif);
}

.clock {
  display: flex;
  flex-direction: column;
  justify-content: flex-end;
  align-items: center;
  flex: 1;
  padding-bottom: 20px;
  font: italic 15px/14px var(--mono);
  white-space: nowrap;
}

/* work area */
.workspace {
  display: flex;
  flex: 1;
  min-height: 0;
  background: #000;
}

.sidebar {
  display: flex;
  flex-direction: column;
  flex: none;
  width: 147px;
  padding-top: 2px;
  background: var(--teal);
  border-right: 2px solid #a8ecdc;
}

.job-box {
  border: solid #000;
  border-width: 1px 1px 0 0;
  margin-top: 1px;
}

.job-box p {
  height: 19px;
  font-size: 15px;
  line-height: 18px;
  background: var(--cyan);
  border-bottom: 1px solid #000;
  white-space: nowrap;
}

.matrix-box {
  height: 28px;
  margin-top: 1px;
  padding: 2px 2px 2px 0;
  border: 1px solid #000;
  border-left: 0;
}

.matrix {
  width: 100%;
  height: 22px;
  text-align: left;
  font-size: 15px;
  background: var(--cyan);
  border: 2px solid;
  border-color: #c8f4f4 #4c8c8c #4c8c8c var(--cyan);
}

.layers {
  display: flex;
  flex-direction: column;
  gap: 5px;
  width: 120px;
  margin-top: 1px;
  padding: 5px 4px 8px 0;
  border-top: 3px solid #2c6c60;
  border-right: 2px solid #a8ecdc;
  border-bottom: 2px solid #a8ecdc;
}

.layer-group {
  background: #000;
}

.layer {
  display: flex;
  gap: 2px;
  height: 16px;
  padding: 1px 2px 1px 1px;
}

.layer-group .layer input {
  appearance: none;
  width: 14px;
  height: 14px;
  background: #fff;
  border: 2px solid #fff;
  outline: 2px solid #000;
  outline-offset: -4px;
}

.layer-group .current input {
  border-color: #0000c8;
}

.layer i {
  width: 14px;
}

.layer .red {
  background: #f00;
}

.layer .blue {
  background: #0018ff;
}

.layer span {
  display: flex;
  flex: 1;
  align-items: center;
  justify-content: space-between;
  padding: 0 2px;
  background: var(--cyan);
  font-size: 12px;
  font-weight: bold;
  line-height: 14px;
}

.layer b {
  font-size: 8px;
}

.layer .white {
  background: #fff;
}

.layer .green {
  background: #00a47c;
}

.layer .orange {
  background: #fcc650;
}

.layer .gray {
  background: #9cb4bc;
}

.layer .silver {
  background: #d8d8d8;
}

.selected {
  height: 20px;
  margin: auto 0 4px;
  background: #fcc650;
  border: 1px solid #000;
  border-left: 0;
  font-size: 12px;
  font-weight: bold;
  line-height: 17px;
}

.board {
  flex: 1;
  min-width: 0;
  height: 100%;
  shape-rendering: crispEdges;
}

.draft {
  font: 300 11px Roboto, sans-serif;
  fill: #1828e8;
}

.draft .mid {
  font-size: 16px;
}

.draft .big {
  font-size: 20px;
}

.silk {
  font: bold 8px var(--mono);
  fill: #f020f0;
}

.silk .vcc {
  font-weight: normal;
  font-size: 13px;
}

.serial {
  font: 11px Roboto, sans-serif;
  fill: #e040e0;
}

.yyww-small {
  font: bold 11px var(--mono);
  fill: #1020ff;
}

.ul-mark {
  font: 11px Roboto, sans-serif;
  fill: #f00;
}

.right-tools {
  display: flex;
  flex-direction: column;
  justify-content: space-between;
  flex: none;
  width: 164px;
  background: var(--teal);
}

.tool-grid {
  display: grid;
  grid-template-columns: repeat(4, 1fr);
  gap: 1px;
  padding: 3px 2px;
}

.tool-grid button {
  display: grid;
  place-items: center;
  height: 40px;
  background: var(--cyan);
  border: 2px solid;
  border-color: #c8f4f4 #4c8c8c #4c8c8c #c8f4f4;
  outline: 1px solid #000;
}

.coords {
  padding: 0 4px 6px;
  border-bottom: 2px solid #c8f4f4;
  font-size: 15px;
  line-height: 15px;
}

/* command line */
footer {
  flex: none;
}

.command {
  display: flex;
  height: 35px;
  padding-bottom: 3px;
  gap: 1px;
  background: #000;
  font-size: 12px;
  font-weight: bold;
}

.mode {
  display: grid;
  place-items: center;
  width: 31px;
  background: var(--cream);
  border: 2px solid #d8d8b0;
  outline: 1px solid var(--cream);
  outline-offset: -1px;
}

.mode:first-child {
  width: 24px;
}

.mode.on {
  width: 29px;
  border: 3px solid var(--teal);
  outline: 1px solid #a0a080;
  outline-offset: -4px;
}

.xy,
.hint {
  display: flex;
  align-items: center;
  background: var(--cream);
}

.xy {
  width: 48px;
  padding-left: 3px;
}

.command input {
  width: 172px;
  background: var(--cream);
  border: 3px solid;
  border-color: #8c8c70 #c8c8a0 #c8c8a0 #8c8c70;
  outline: 1px solid var(--cream);
}

.hint {
  flex: 1;
  padding-left: 4px;
}

.unit {
  width: 79px;
  padding: 3px;
  background: var(--teal);
}

.unit button {
  display: flex;
  align-items: center;
  justify-content: space-between;
  width: 100%;
  height: 26px;
  padding: 0 5px;
  border: 2px solid;
  border-color: #a8ecdc #2c7c6c #2c7c6c #a8ecdc;
  font-size: 15px;
}

.unit i {
  width: 12px;
  height: 7px;
  border: 2px solid;
  border-color: #c8f4f4 #2c7c6c #2c7c6c #c8f4f4;
}

.status-line {
  height: 27px;
  background: #b4fffb;
  border: solid;
  border-width: 2px 3px 2px 0;
  border-color: #e0ffff #5c9c9c #5c9c9c;
  font-size: 12px;
  font-weight: bold;
  line-height: 23px;
  text-align: center;
  white-space: nowrap;
}

/* pop view windows */
.popview {
  position: absolute;
  display: flex;
  flex-direction: column;
  padding: 0 6px 7px;
  background: linear-gradient(#34383c, #404448 30%, #0a0a0c 32%, #08080c);
  border: 1px solid #a0a4a8;
  border-radius: 6px;
}

.popview.first {
  left: 409px;
  top: 138px;
  width: 396px;
  height: 389px;
  border-bottom-color: #fff;
}

.popview.second {
  left: 234px;
  top: 532px;
  width: 478px;
  height: 342px;
}

.popview header {
  display: flex;
  flex: none;
  align-items: center;
  gap: 2px;
  height: 27px;
  background: linear-gradient(90deg, #34383c, #70747a 20px, #70747a 70px, #202428 110px, #000 200px, #34383c);
}

.popview header span {
  padding: 0 4px 2px;
  font: 12px var(--ui);
}

.shut {
  align-self: flex-start;
  width: 48px;
  height: 19px;
  margin-left: auto;
  background: #24282c;
  border: 1px solid #8c9094;
  border-top: 0;
  border-radius: 0 0 5px 5px;
  color: #fff;
  font: bold 16px/14px var(--ui);
}

.pop-body {
  display: grid;
  flex: 1;
  min-height: 0;
  grid-template: minmax(0, 1fr) 28px / minmax(0, 1fr) 36px;
  gap: 1px;
  background: #000;
  border-top: 1px solid #a0a4a8;
}

.pop-view {
  overflow: hidden;
  border: 3px solid;
  border-color: #2c6c60 #a8ecdc #a8ecdc #2c6c60;
}

.pop-view svg {
  display: block;
  width: 100%;
  height: 100%;
}

.pop-view text {
  text-anchor: middle;
}

.pop-label {
  font: 500 32px Roboto, sans-serif;
  fill: #ff20ff;
}

.pop-digits {
  font: 500 52px Roboto, sans-serif;
  fill: #ff20ff;
}

.pop-week {
  font: bold 54px "Liberation Mono", monospace;
  fill: #0018ff;
}

.pop-d1 {
  font: 72px "DejaVu Sans Mono", monospace;
  fill: #f00;
  stroke: #f00;
  stroke-width: 2px;
}

.pop-r {
  font: bold 22px "Liberation Sans", sans-serif;
  fill: #f00;
}

.pop-tools {
  display: flex;
  flex-direction: column;
  gap: 2px;
  padding: 1px 1px 0;
}

.pop-tools button {
  display: grid;
  place-items: center;
  height: 33px;
  background: var(--cyan);
  border: 3px solid;
  border-color: #c8f4f4 #4c8c84 #4c8c84 #c8f4f4;
  outline: 2px solid var(--teal);
  outline-offset: -2px;
}

.pop-tools svg {
  width: 22px;
  height: 22px;
}

.pop-tools i {
  flex: 1;
  background: var(--teal);
}

.pop-close {
  grid-column: 1 / 3;
  background: var(--cyan);
  border: 3px solid;
  border-color: #c8f4f4 #4c8c84 #4c8c84 #c8f4f4;
  outline: 2px solid var(--teal);
  outline-offset: -2px;
  font-size: 15px;
  font-weight: bold;
}

/* spreadsheet window */
.excel {
  position: absolute;
  left: 1153px;
  right: 0;
  top: 69px;
  bottom: 99px;
  display: flex;
  flex-direction: column;
  padding: 0 0 6px 5px;
  overflow: hidden;
  background: #101418;
  border: 1px solid #b8bcc0;
  border-right: 0;
  border-radius: 7px 0 0 7px;
  font: 12px var(--ui);
  color: #1c4590;
}

.orb {
  position: absolute;
  z-index: 2;
  left: 9px;
  top: 7px;
  display: grid;
  place-items: center;
  width: 36px;
  height: 36px;
  border-radius: 50%;
  background: radial-gradient(circle at 50% 35%, #fff, #d8dce4 70%, #8890a0);
}

.excel-title {
  display: flex;
  flex: none;
  height: 28px;
  padding-left: 39px;
  background: linear-gradient(90deg, #606468, #282c30 110px, #000 170px, #000 200px, transparent 240px, transparent 548px, #000 570px, #181c20 590px, #6c98a4 594px, #5c8c9c 700px, #a8c8d0), linear-gradient(#484c50, #85888c 50%, #585c60);
}

.quick {
  width: 42px;
  height: 20px;
  margin-top: 4px;
  padding: 3px 12px;
  background: #50545c;
  border: 1px solid #70747c;
  border-radius: 0 10px 10px 0;
}

.quick svg {
  display: block;
}

.more {
  width: 24px;
  padding-left: 6px;
  color: #fff;
  line-height: 30px;
}

.excel-title h1 {
  flex: 1;
  min-width: 0;
  padding-left: 136px;
  font: 12px/29px "Open Sans", "Noto Sans CJK SC", sans-serif;
  color: #000;
  white-space: nowrap;
}

.win-buttons {
  display: flex;
  flex: none;
  height: 18px;
  width: 77px;
  overflow: hidden;
}

.win-buttons button {
  display: grid;
  flex: none;
  place-items: center;
  width: 29px;
  background: linear-gradient(#b4ccd0, #6c8890 50%, #8cacb0);
  border: 1px solid #c8d8dc;
  border-top: 0;
}

.win-buttons .end {
  width: 46px;
  background: linear-gradient(#e09080, #c02c10 50%, #d85030);
  color: #fff;
  font-weight: bold;
}

i.min {
  width: 12px;
  height: 4px;
  background: #fff;
  border: 1px solid #485058;
}

i.max {
  width: 11px;
  height: 9px;
  border: 3px solid #fff;
  outline: 1px solid #485058;
}

.tabs {
  display: flex;
  flex: none;
  height: 27px;
  padding: 2px 0 0 48px;
  background: #bfdbff;
  border-top: 1px solid #f0f8ff;
  line-height: 23px;
}

.tabs a {
  padding: 0 14px;
  margin-right: 1px;
}

.tabs a.active {
  padding: 0 11px;
  background: linear-gradient(#f4f9ff, #e2ecf8);
  border: 1px solid #a8c4ec;
  border-bottom: 0;
  border-radius: 4px 4px 0 0;
}

.tabs-end {
  display: flex;
  align-items: center;
  gap: 12px;
  margin-left: auto;
}

.ask {
  width: 14px;
  height: 14px;
  border: 1px solid #fff;
  border-radius: 50%;
  outline: 1px solid #446cb4;
  background: #2c64d8;
  color: #fff;
  font-weight: bold;
  line-height: 12px;
}

.tabs-end i.min {
  width: 8px;
  height: 3px;
  background: #666;
  border: 0;
}

.tabs-end i.max {
  border: 1px solid #666;
  border-top-width: 3px;
  outline: 0;
}

.ribbon {
  display: flex;
  flex: none;
  gap: 3px;
  height: 107px;
  padding: 3px 0 3px 4px;
  background: linear-gradient(#dbe7f6, #c8dbf1 40%, #d6e6f7 80%, #e4f6fc);
  border-top: 1px solid #a4c4f0;
  border-bottom: 1px solid #80c0c8;
}

.group {
  display: flex;
  flex-direction: column;
  flex: none;
  border: 1px solid #a9c4e4;
  border-radius: 3px;
  box-shadow: inset 1px 1px #e6f0fa;
}

.group h2 {
  position: relative;
  height: 18px;
  background: #c1d8f0;
  font: 12px/17px var(--ui);
  color: #3e6aaa;
  text-align: center;
}

.group h2 svg {
  position: absolute;
  right: 4px;
  top: 4px;
}

.group-body {
  display: flex;
  flex: 1;
  min-height: 0;
}

.g-clip {
  width: 72px;
}

.g-font {
  width: 151px;
}

.g-align {
  width: 112px;
}

.g-num {
  width: 88px;
}

.g-style {
  width: 116px;
}

.g-cell {
  width: 69px;
}

.g-edit {
  width: 124px;
}

.stack {
  display: flex;
  flex-direction: column;
}

.group-body.stack {
  gap: 3px;
  padding: 3px;
}

.line {
  display: flex;
  gap: 3px;
}

.line + .line .seg {
  height: 21px;
}

.combo {
  position: relative;
  width: 47px;
  height: 25px;
  background: #eaf2fb;
  border: 1px solid #b4cae8;
  color: #000;
}

.line .combo + .combo {
  margin-left: -4px;
}

.combo.wide {
  width: 97px;
}

.combo.full {
  width: 80px;
}

.combo select {
  width: 100%;
  height: 100%;
  padding-left: 2px;
  appearance: none;
}

.combo::after {
  content: "";
  position: absolute;
  right: 5px;
  top: 10px;
  border: 3px solid transparent;
  border-top-color: #5b7cb0;
}

.seg {
  display: flex;
  height: 22px;
  border: 1px solid #96b2dc;
  border-radius: 2px;
}

.seg button {
  display: grid;
  place-items: center;
  width: 22px;
  color: #222;
  line-height: 14px;
}

.seg .on,
.on-seg {
  background: linear-gradient(#fbd8a0, #f8b04c 50%, #fcdc88);
}

.seg .drop {
  width: 11px;
  color: #4c6ca4;
  font-size: 9px;
}

.seg .serif {
  display: block;
  font: bold 15px/19px var(--serif);
}

.seg .serif.small {
  font-size: 12px;
}

.seg sup {
  font-size: 8px;
  line-height: 1px;
  color: #2c5ca8;
}

.seg .wen,
.seg .dec {
  display: block;
  font-size: 9px;
  line-height: 9px;
}

.dec b {
  color: #2c5cc0;
}

.glyph {
  font: bold 13px var(--serif);
  fill: #2c4c8c;
}

/* vertical alignment glyphs */
.bars {
  width: 15px;
  height: 10px;
  background: repeating-linear-gradient(#111 0 1px, transparent 1px 3px);
}

.bars.top {
  margin-bottom: 5px;
}

.bars.low {
  margin-top: 5px;
}

.big-btn {
  display: flex;
  flex-direction: column;
  align-items: center;
  width: 46px;
  padding-top: 5px;
  line-height: 16px;
  white-space: nowrap;
}

.big-btn small {
  font-size: 9px;
}

.g-clip .big-btn {
  gap: 3px;
}

.clip-icons {
  gap: 6px;
  padding-top: 4px;
}

.big-btn.two {
  display: block;
  width: 42px;
  padding-top: 4px;
}

.big-btn.two svg {
  display: block;
  margin: 0 auto 4px;
}

.text-list button {
  display: flex;
  align-items: center;
  gap: 3px;
  height: 19px;
  padding-left: 3px;
  white-space: nowrap;
}

.text-list small,
.two small {
  padding-left: 2px;
  font-size: 9px;
  color: #4c6ca4;
}

.g-edit .text-list {
  gap: 3px;
  width: 36px;
  padding: 3px;
}

.sigma {
  width: 14px;
  color: #000;
  font: bold 15px var(--serif);
}

.az {
  font: bold 17px var(--serif);
}

.az.a {
  fill: #2c64b8;
}

.az.z {
  fill: #a83028;
}

.warning,
.formula {
  box-shadow: 0 6px #c6dbf5, 0 -6px #c6dbf5;
}

.warning {
  display: flex;
  flex: none;
  align-items: center;
  height: 33px;
  margin-top: 6px;
  padding-left: 5px;
  background: linear-gradient(#fff, #eaf3fc);
  border: 1px solid #b0cae8;
}

.warning strong {
  margin: 0 12px 0 11px;
}

.warning button {
  width: 70px;
  height: 21px;
  margin-left: 12px;
  background: #fff;
  border: 1px solid #9cb8dc;
}

.formula {
  display: flex;
  flex: none;
  height: 20px;
  margin: 5px 0 3px;
  background: #fff;
  border: solid #6488b4;
  border-width: 1px 0;
  color: #000;
}

.name-box {
  display: flex;
  align-items: center;
  width: 160px;
}

.name-box input {
  width: 146px;
  text-align: center;
  font-size: 14px;
}

.name-box i {
  border: 4px solid transparent;
  border-top-color: #000;
  border-bottom: 0;
}

.fx {
  display: flex;
  align-items: center;
  justify-content: space-between;
  width: 80px;
  padding: 0 6px 0 4px;
  background: linear-gradient(#e4eefa, #a4c0e4);
  border: 1px solid #88a8d0;
  border-radius: 10px 0 0 10px;
}

.fx i {
  width: 10px;
  height: 10px;
  border-radius: 50%;
  background: #c4d0e0;
}

.fx em {
  font: italic bold 15px/16px var(--serif);
  color: #505864;
}

.fx sub {
  font-size: 11px;
}

.fx-input {
  flex: 1;
  min-width: 0;
  padding-left: 12px;
  font: 14px "Noto Sans CJK SC", sans-serif;
}

.sheet {
  position: relative;
  flex: 1;
  min-height: 0;
  overflow: hidden;
  background: #fff;
}

.sheet table {
  width: 822px;
  table-layout: fixed;
  border-collapse: collapse;
  color: #000;
  font: bold 17px/19px "Noto Sans CJK SC", sans-serif;
  text-align: center;
}

.c-n {
  width: 34px;
}

.c-a {
  width: 58px;
}

.c-b {
  width: 37px;
}

.c-c {
  width: 166px;
}

.c-d {
  width: 31px;
}

.c-e {
  width: 81px;
}

.c-f {
  width: 54px;
}

.c-g {
  width: 49px;
}

.c-h {
  width: 89px;
}

.c-i {
  width: 139px;
}

.c-j {
  width: 84px;
}

.sheet th {
  background: #e4ecf7;
  border: 1px solid #9eb6ce;
  font: 17px/16px var(--serif);
  color: #38444c;
  vertical-align: bottom;
}

.sheet thead th {
  height: 19px;
  background: linear-gradient(#f8fafd, #d8e2f0);
}

.sheet thead .corner {
  background: linear-gradient(135deg, #a8c4e8 60%, #e8f0fa 60%);
}

.sheet thead .sel {
  background: linear-gradient(#f8d79c, #f0bf5c);
  border-color: #f09838;
}

.sheet tbody .sel {
  background: #ffd28c;
  border-color: #f09838;
}

.sheet td {
  border: 1px solid #000;
}

.r-30 {
  height: 30px;
}

.r-34 {
  height: 34px;
}

.r-40 {
  height: 40px;
}

.r-45 {
  height: 45px;
}

.sheet .title {
  border-top: 0;
  font-size: 24px;
  line-height: 28px;
}

.sheet .latin {
  font-family: var(--mono);
  font-size: 15px;
}

.sheet .num {
  font-family: var(--serif);
}

.sheet .thin {
  font-weight: normal;
  font-size: 16px;
}

.sheet .ask-col {
  color: #0000d0;
}

.sheet .tail {
  padding-left: 6px;
  text-align: left;
  white-space: nowrap;
}

.sheet .note {
  padding-left: 2px;
  font-size: 14px;
  text-align: left;
}

.note span {
  font: bold 12px var(--mono);
}

.sheet .active {
  outline: 1px solid #000;
  outline-offset: -3px;
}

.sheet .yellow {
  background: #ff0;
}

.sheet .ref {
  padding-left: 2px;
  text-align: left;
  font-weight: normal;
  font-size: 15px;
  white-space: nowrap;
}

.ref a {
  color: #800080;
  text-decoration: underline;
}

/* red frame drawn over the highlighted note */
.callout {
  position: absolute;
  left: 83px;
  top: 302px;
  width: 330px;
  height: 48px;
  border: 2px solid #e01010;
  box-shadow: 2px 2px 4px #888, inset 2px 2px 4px #aaa;
}

.sheet-bar {
  display: flex;
  flex: none;
  height: 16px;
  background: #bdd2ee;
  border-top: 1px solid #8ca8d0;
  font: 14px/15px "Noto Sans CJK SC", sans-serif;
  color: #2c4478;
}

.sheet-nav {
  display: flex;
  align-items: center;
  justify-content: space-around;
  width: 64px;
  fill: #1c3c80;
}

.sheet-nav button {
  display: flex;
}

.sheet-bar a {
  flex: none;
  width: 79px;
  padding-left: 11px;
  background: linear-gradient(120deg, transparent 4px, #6484b4 4px, #6484b4 5px, #d4e4f8 5px);
  white-space: nowrap;
  overflow: hidden;
}

.sheet-bar .active {
  width: 44px;
  padding-left: 8px;
  background: #fff;
}

.sheet-bar .cut {
  width: 42px;
}

.scroll {
  display: flex;
  flex: 1;
  align-items: center;
  min-width: 0;
  padding: 0 2px;
  background: #7896c4;
  border-left: 3px solid #e0eafa;
  font-size: 13px;
}

.scroll i {
  width: 26px;
  height: 14px;
  margin-left: 3px;
  background: repeating-linear-gradient(90deg, #7c8ca8 0 1px, transparent 1px 2px) center / 8px 6px no-repeat, linear-gradient(#fff, #c8d4e8);
  border: 1px solid #5c7cac;
  border-radius: 2px;
}

.far {
  margin-left: auto;
}

.excel-status {
  display: flex;
  flex: none;
  align-items: center;
  height: 22px;
  padding-left: 7px;
  background: linear-gradient(#d8e8fc, #b8d4f8 45%, #a4c4f0 50%, #c4dcf8);
  overflow: hidden;
}

.excel-status > span {
  width: 34px;
  border-right: 1px solid #88a8d8;
}

.views {
  display: flex;
  margin-left: auto;
  border: 1px solid #88a4d0;
  border-radius: 2px;
}

.views button {
  display: grid;
  place-items: center;
  width: 18px;
  height: 17px;
}

.views .on {
  background: #fcd898;
}

.excel-status label {
  padding: 0 8px;
}

.round {
  flex: none;
  width: 15px;
  height: 15px;
  border: 1px solid #5878ac;
  border-radius: 50%;
  background: #e8f0fc;
  line-height: 12px;
}

.excel-status input {
  appearance: none;
  width: 101px;
  height: 1px;
  background: #5878ac;
}

.excel-status input::-webkit-slider-thumb {
  appearance: none;
  width: 9px;
  height: 13px;
  background: #e8f0fc;
  border: 1px solid #5878ac;
  border-radius: 1px 1px 5px 5px;
}

.excel-status .round:last-child {
  margin-right: -8px;
}
```
